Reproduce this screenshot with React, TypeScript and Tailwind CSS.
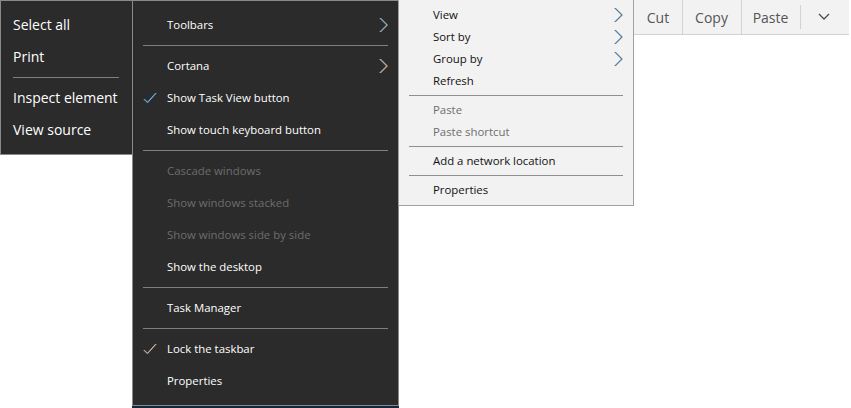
const Chevron = ({ left, right, core }: { left: string; right: string; core: string }) => (
  <svg width="10" height="16" viewBox="0 0 10 16" fill="none" className="shrink-0">
    <path d="M1.6 1 L8.6 8 L1.6 15" stroke={left} strokeWidth="1" />
    <path d="M2.6 1 L9.6 8 L2.6 15" stroke={right} strokeWidth="0.8" />
    <path d="M2.1 1 L9.1 8 L2.1 15" stroke={core} strokeWidth="0.5" />
  </svg>
);

const Check = ({ left, right }: { left: string; right: string }) => (
  <svg width="14" height="12" viewBox="0 0 14 12" fill="none" className="shrink-0">
    <path d="M0.7 7 L4.2 10.5 L12.7 1" stroke={left} strokeWidth="1" />
    <path d="M1.3 7 L4.8 10.5 L13.3 1" stroke={right} strokeWidth="0.8" />
  </svg>
);

const DarkSep = () => (
  <div className="h-[9px] flex items-center">
    <div className="h-px w-full bg-[#7f7f7f]" />
  </div>
);

const LightSep = () => (
  <div className="h-[7px] flex items-center">
    <div className="h-px w-full bg-[#8f8f8f]" />
  </div>
);

const DarkRow = ({
  label,
  disabled,
  arrow,
  warm,
  check,
}: {
  label: string;
  disabled?: boolean;
  arrow?: boolean;
  warm?: boolean;
  check?: boolean;
}) => (
  <div className={`h-8 flex items-center ${disabled ? "text-[#6d6d6d]" : "text-white"}`}>
    <div className="w-6 flex items-center">
      {check && (warm ? <Check left="#9fc4dc" right="#f0b070" /> : <Check left="#3f9fea" right="#8fc4ec" />)}
    </div>
    <span className="flex-1">{label}</span>
    {arrow &&
      (warm ? (
        <Chevron left="#8fbce0" right="#f0904a" core="#f4c8a4" />
      ) : (
        <Chevron left="#3f9fea" right="#d8a878" core="#a8d4f4" />
      ))}
  </div>
);

const LightRow = ({ label, disabled, arrow }: { label: string; disabled?: boolean; arrow?: boolean }) => (
  <div className={`h-[22px] flex items-center ${disabled ? "text-[#6e6e6e]" : "text-[#111111]"}`}>
    <span className="flex-1">{label}</span>
    {arrow && <Chevron left="#0f8ae8" right="#d89a60" core="#0f4f80" />}
  </div>
);

export default function App() {
  return (
    <div className="flex items-start w-[851px] h-[408px] bg-white overflow-hidden font-['Open_Sans','Noto_Sans',sans-serif]">
      <div className="w-[133px] shrink-0 h-[155px] bg-[#2b2b2b] border border-[#8a8a8a] py-[8px] pl-3 pr-[13px] text-white text-[14px]">
        <div className="h-8 pb-[2px] flex items-center">Select all</div>
        <div className="h-8 pb-[2px] flex items-center">Print</div>
        <DarkSep />
        <div className="h-8 pb-[2px] flex items-center whitespace-nowrap">Inspect element</div>
        <div className="h-8 pb-[2px] flex items-center">View source</div>
      </div>

      <div className="w-[267px] shrink-0 -ml-px flex flex-col">
        <div className="h-[406px] bg-[#2b2b2b] border border-[#8a8a8a] py-[8px] px-[10px] text-[11.4px]">
          <DarkRow label="Toolbars" arrow />
          <DarkSep />
          <DarkRow label="Cortana" arrow warm />
          <DarkRow label="Show Task View button" check />
          <DarkRow label="Show touch keyboard button" />
          <DarkSep />
          <DarkRow label="Cascade windows" disabled />
          <DarkRow label="Show windows stacked" disabled />
          <DarkRow label="Show windows side by side" disabled />
          <DarkRow label="Show the desktop" />
          <DarkSep />
          <DarkRow label="Task Manager" />
          <DarkSep />
          <DarkRow label="Lock the taskbar" check warm />
          <DarkRow label="Properties" />
        </div>
        <div className="h-[2px] bg-[#12283a]" />
      </div>

      <div className="w-[236px] shrink-0 h-[206px] -ml-px bg-[#f2f2f2] border border-[#a0a0a0] border-t-0 pt-[4px] px-[10px] text-[11.4px]">
        <div className="pl-6">
          <LightRow label="View" arrow />
          <LightRow label="Sort by" arrow />
          <LightRow label="Group by" arrow />
          <LightRow label="Refresh" />
        </div>
        <LightSep />
        <div className="pl-6">
          <LightRow label="Paste" disabled />
          <LightRow label="Paste shortcut" disabled />
        </div>
        <LightSep />
        <div className="pl-6">
          <LightRow label="Add a network location" />
        </div>
        <LightSep />
        <div className="pl-6">
          <LightRow label="Properties" />
        </div>
      </div>

      <div className="w-[215px] shrink-0 h-[35px] bg-[#f2f2f2] border-b border-[#d2d2d2] flex text-[14px] text-[#555555]">
        <div className="w-[49px] flex items-center justify-center border-r border-[#d2d2d2]">Cut</div>
        <div className="w-[59px] pr-px flex items-center justify-center border-r border-[#d2d2d2]">Copy</div>
        <div className="w-[59px] pr-[2px] flex items-center justify-center relative">
          Paste
          <div className="absolute right-0 top-[5px] bottom-[5px] w-px bg-[#d2d2d2]" />
        </div>
        <div className="w-[47px] pr-[2px] flex items-center justify-center">
          <svg width="12" height="8" viewBox="0 0 12 8" fill="none">
            <path d="M1 1 L6 6 L11 1" stroke="#4c4c4c" strokeWidth="1.3" />
          </svg>
        </div>
      </div>
    </div>
  );
}
